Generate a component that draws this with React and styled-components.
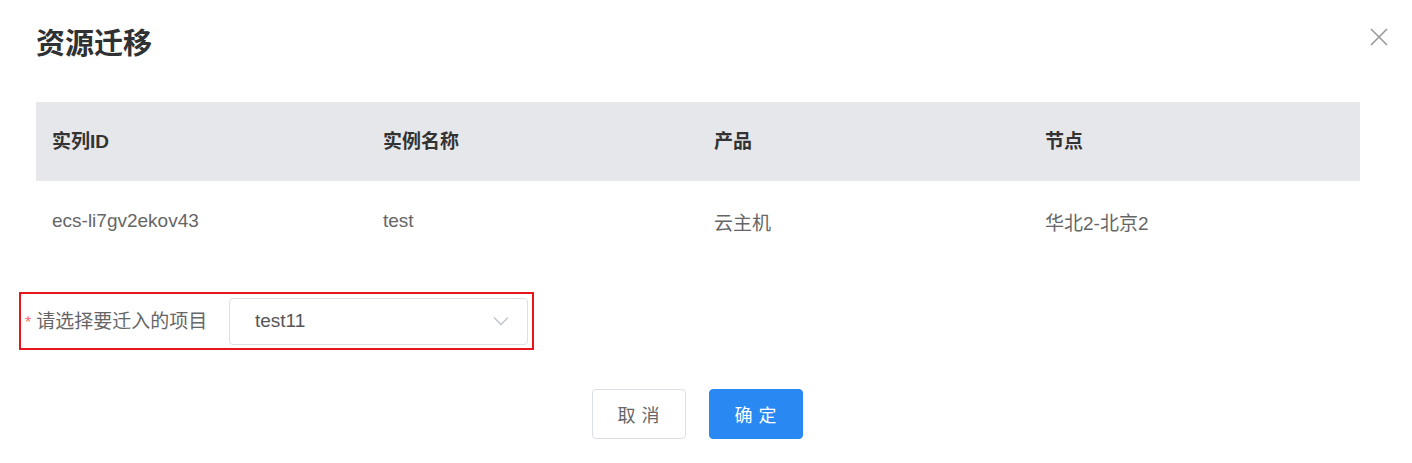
import React from 'react';
import styled, { createGlobalStyle } from 'styled-components';

const GlobalStyle = createGlobalStyle`
  body {
    margin: 0;
    background: #fff;
    font-family: "Liberation Sans", Arial, "Noto Sans CJK SC", sans-serif;
  }
`;

const Dialog = styled.div`
  position: relative;
  width: 1412px;
  height: 463px;
  box-sizing: border-box;
  padding: 24px 52px 0 36px;
`;

const Title = styled.h2`
  margin: 0;
  font-size: 29px;
  line-height: 40px;
  font-weight: 700;
  color: #303133;
`;

const Close = styled.button`
  position: absolute;
  top: 26px;
  right: 22px;
  width: 22px;
  height: 22px;
  padding: 0;
  border: 0;
  background: none;
  display: flex;
  align-items: center;
  justify-content: center;
`;

const Table = styled.div`
  margin-top: 38px;
  display: grid;
  grid-template-columns: repeat(4, 1fr);
`;

const Cell = styled.div`
  height: ${({ head }) => (head ? '79px' : '80px')};
  box-sizing: border-box;
  display: flex;
  align-items: center;
  padding: ${({ head }) => (head ? '0 0 5px 16px' : '0 0 0 16px')};
  font-size: 19px;
  background: ${({ head }) => (head ? '#e6e7eb' : '#fff')};
  color: ${({ head }) => (head ? '#333' : '#666')};
  font-weight: ${({ head }) => (head ? 700 : 400)};
`;

const FormRow = styled.div`
  margin: 31px 0 0 -17px;
  width: 515px;
  height: 58px;
  box-sizing: border-box;
  border: 2px solid #e8161c;
  display: flex;
  align-items: center;
  padding-left: 4px;
`;

const Label = styled.label`
  font-size: 19px;
  color: #666;
  width: 204px;
  margin-bottom: 3px;
  &::before {
    content: '*';
    color: #f56c6c;
    font-size: 16px;
    margin-right: 5px;
  }
`;

const Select = styled.div`
  width: 299px;
  height: 47px;
  box-sizing: border-box;
  border: 1px solid #dcdfe6;
  border-radius: 4px;
  display: flex;
  align-items: center;
  justify-content: space-between;
  padding: 0 18px 0 25px;
  font-size: 19px;
  color: #555;
`;

const Footer = styled.div`
  margin-top: 39px;
  display: flex;
  justify-content: center;
  gap: 23px;
  padding-right: 2px;
`;

const Button = styled.button`
  width: 94px;
  height: 50px;
  border-radius: 4px;
  font-size: 18px;
  letter-spacing: 6px;
  text-indent: 6px;
  font-family: inherit;
  border: 1px solid ${({ primary }) => (primary ? '#2a88f3' : '#dcdfe6')};
  background: ${({ primary }) => (primary ? '#2a88f3' : '#fff')};
  color: ${({ primary }) => (primary ? '#fff' : '#666')};
`;

const heads = ['实列ID', '实例名称', '产品', '节点'];
const row = ['ecs-li7gv2ekov43', 'test', '云主机', '华北2-北京2'];

export default function App() {
  return (
    <>
      <GlobalStyle />
      <Dialog>
        <Title>资源迁移</Title>
        <Close>
          <svg width="18" height="18" viewBox="0 0 18 18">
            <path d="M1 1L17 17M17 1L1 17" stroke="#999" strokeWidth="1.6" />
          </svg>
        </Close>
        <Table>
          {heads.map((h) => (
            <Cell head key={h}>{h}</Cell>
          ))}
          {row.map((c) => (
            <Cell key={c}>{c}</Cell>
          ))}
        </Table>
        <FormRow>
          <Label>请选择要迁入的项目</Label>
          <Select>
            test11
            <svg width="16" height="10" viewBox="0 0 16 10">
              <path d="M1 1.5L8 8.5L15 1.5" fill="none" stroke="#c0c4cc" strokeWidth="1.4" />
            </svg>
          </Select>
        </FormRow>
        <Footer>
          <Button>取消</Button>
          <Button primary>确定</Button>
        </Footer>
      </Dialog>
    </>
  );
}
